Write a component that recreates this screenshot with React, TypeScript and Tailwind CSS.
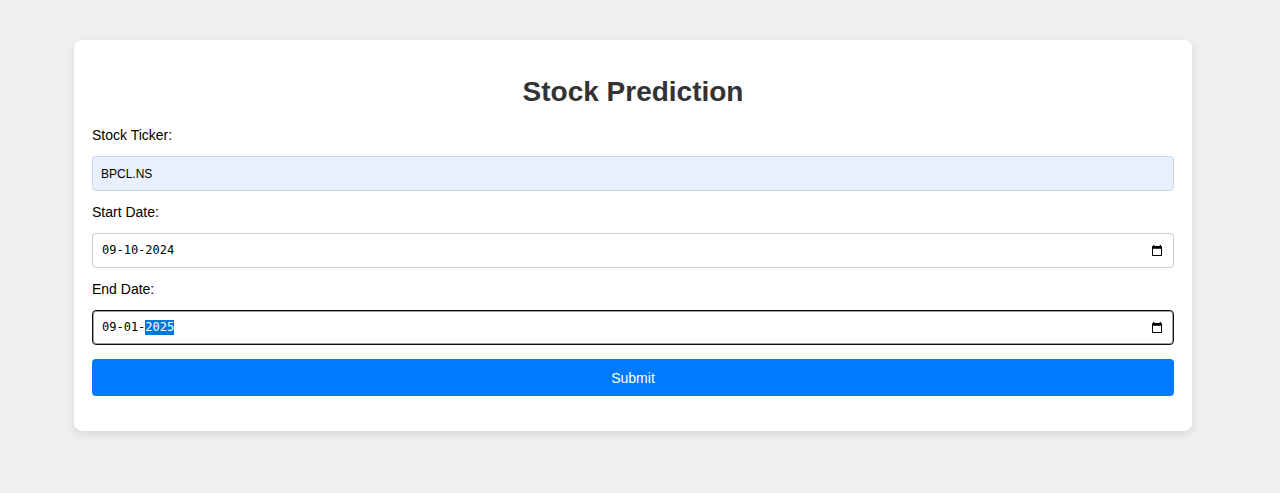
import { useEffect, useRef, useState, type RefObject } from "react";

function CalendarIcon() {
  return (
    <svg width="12" height="12" viewBox="0 0 12 12" aria-hidden="true">
      <path
        fill="#000"
        fillRule="evenodd"
        d="M2 0h1.300v1h5.400V0H10v1h.2a.8.8 0 0 1 .8.8v8.400a.8.8 0 0 1-.8.8H1.800a.8.8 0 0 1-.8-.8V1.800A.8.8 0 0 1 1.800 1H2zM2 3.700V10h8V3.700z"
      />
    </svg>
  );
}

type DateFieldProps = {
  id: string;
  label: string;
  initial: string;
  inputRef?: RefObject<HTMLInputElement | null>;
};

function DateField({ id, label, initial, inputRef }: DateFieldProps) {
  const [value, setValue] = useState(initial);
  return (
    <div className="flex flex-col gap-[11px]">
      <label htmlFor={id} className="text-sm leading-5">
        {label}
      </label>
      <div className="flex h-[35px] items-center rounded border border-[#ccc] pr-2.5 pl-[9px] focus-within:border-[#101010] focus-within:ring-1 focus-within:ring-[#101010]/40 focus-within:ring-inset">
        <input
          id={id}
          ref={inputRef}
          type="text"
          value={value}
          onChange={(event) => setValue(event.target.value)}
          className="min-w-0 flex-1 font-['DejaVu_Sans_Mono',monospace] text-xs leading-[15px] outline-none selection:bg-[#0078d7] selection:text-white"
        />
        <button type="button" aria-label={`Choose ${label}`}>
          <CalendarIcon />
        </button>
      </div>
    </div>
  );
}

export default function App() {
  const endDate = useRef<HTMLInputElement>(null);

  useEffect(() => {
    endDate.current?.focus();
    endDate.current?.setSelectionRange(6, 10);
  }, []);

  return (
    <div className="min-h-screen bg-[#efefef] pt-10 pr-[88px] pb-10 pl-[74px] font-['Liberation_Sans',Arial,sans-serif] text-black">
      <main className="rounded-lg bg-white px-[18px] py-[35px] shadow-[0_3px_9px_rgba(0,0,0,0.1)]">
        <h1 className="text-center text-[28px] leading-[34px] font-bold text-[#333]">
          Stock Prediction
        </h1>
        <form
          className="mt-4 flex flex-col gap-[11px]"
          onSubmit={(event) => event.preventDefault()}
        >
          <div className="flex flex-col gap-[11px]">
            <label htmlFor="ticker" className="text-sm leading-5">
              Stock Ticker:
            </label>
            <input
              id="ticker"
              type="text"
              defaultValue="BPCL.NS"
              className="h-[35px] w-full rounded border border-[#cfd6e2] bg-[#e8f0fe] px-2 text-xs"
            />
          </div>
          <DateField id="start" label="Start Date:" initial="09-10-2024" />
          <DateField id="end" label="End Date:" initial="09-01-2025" inputRef={endDate} />
          <button
            type="submit"
            className="mt-[3px] h-[37px] rounded bg-[#007bff] text-sm text-white"
          >
            Submit
          </button>
        </form>
      </main>
    </div>
  );
}
